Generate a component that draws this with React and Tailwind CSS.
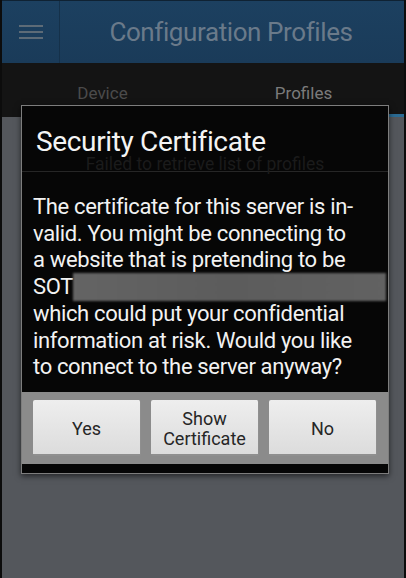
import React from "react";

export default function App() {
  const lines = [
    "The certificate for this server is in-",
    "valid. You might be connecting to",
    "a website that is pretending to be",
  ];
  const lines2 = [
    "which could put your confidential",
    "information at risk. Would you like",
    "to connect to the server anyway?",
  ];
  return (
    <div
      className="relative w-[406px] h-[578px] overflow-hidden bg-[#54575c] border-x-2 border-[#0c0c0c] flex flex-col"
      style={{ fontFamily: "Roboto, 'Noto Sans', sans-serif" }}
    >
      {/* Header */}
      <div className="h-[63px] flex bg-gradient-to-b from-[#1c4060] to-[#1a3b59] border-t border-[#0f2233]">
        <div className="w-[58px] border-r border-[#15314a] flex flex-col items-center justify-center gap-[4px]">
          <div className="w-[24px] h-[2px] bg-[#5d6b77]" />
          <div className="w-[24px] h-[2px] bg-[#5d6b77]" />
          <div className="w-[24px] h-[2px] bg-[#5d6b77]" />
        </div>
        <div className="flex-1 flex items-center justify-center text-[26px] tracking-[-0.4px] text-[#6a7a8a] pr-[2px]">
          Configuration Profiles
        </div>
      </div>
      {/* Tabs */}
      <div className="h-[54px] flex bg-[#141414]">
        <div className="flex-1 flex items-center justify-center pt-[8px] text-[17px] text-[#4b4b4b]">
          Device
        </div>
        <div className="flex-1 flex flex-col">
          <div className="flex-1 flex items-center justify-center pt-[10px] text-[17px] text-[#7b7b7b]">
            Profiles
          </div>
          <div className="h-[3px] bg-[#2b6b93]" />
        </div>
      </div>
      {/* Content */}
      <div className="flex-1 bg-[#54575c]" />

      {/* Dialog */}
      <div className="absolute left-[19px] top-[105px] w-[368px] h-[369px] bg-[#060606] border border-[#7d7d7d] shadow-[0_2px_6px_rgba(0,0,0,0.6)] flex flex-col">
        <div className="relative h-[65px] shrink-0">
          <span className="absolute left-0 right-0 top-[47px] text-center text-[17.5px] leading-[22px] text-[#1b1b1b]">
            Failed to retrieve list of profiles
          </span>
          <span className="absolute left-[14px] top-[19px] text-[28px] leading-[34px] tracking-[-0.35px] text-[#f4f4f4]">
            Security Certificate
          </span>
        </div>
        <div className="h-[1px] shrink-0 bg-[#262626]" />
        <div className="h-[220px] shrink-0 pt-[22px] pl-[11px] text-[22px] tracking-[-0.35px] leading-[26.7px] text-[#f2f2f2] whitespace-nowrap">
          {lines.map((l) => (
            <div key={l}>{l}</div>
          ))}
          <div className="flex items-center h-[26.7px]">
            <span>SOT</span>
            <span className="inline-block w-[313px] h-[28px] bg-gradient-to-r from-[#646464] via-[#5c5c5c] to-[#626262] blur-[1px]" />
          </div>
          {lines2.map((l) => (
            <div key={l}>{l}</div>
          ))}
        </div>
        <div className="h-[72px] shrink-0 bg-[#8b8b8b] flex gap-[10px] pl-[11px] pt-[8px]">
          {[["Yes"], ["Show", "Certificate"], ["No"]].map((b, i) => (
            <div
              key={i}
              className="w-[108px] h-[56px] rounded-[2px] bg-gradient-to-b from-[#eeeeee] to-[#dcdcdc] border-b-2 border-r border-[#8f8f8f] flex flex-col items-center justify-center pt-[3px] text-[18px] leading-[20px] text-[#262626]"
            >
              {b.map((t) => (
                <span key={t}>{t}</span>
              ))}
            </div>
          ))}
        </div>
        <div className="flex-1 bg-[#060606]" />
      </div>
    </div>
  );
}
